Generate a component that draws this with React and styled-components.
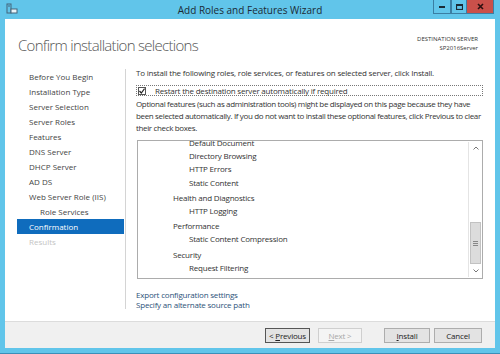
import React from 'react';
import styled, { createGlobalStyle } from 'styled-components';

const Global = createGlobalStyle`
  html, body { margin:0; padding:0; }
  body { width:500px; height:354px; overflow:hidden; font-family:"Open Sans", "Noto Sans", sans-serif; }
`

const Window = styled.div`
  width:500px; height:354px; box-sizing:border-box;
  background:#61c5ea; display:flex; flex-direction:column;
  border-bottom:1px solid #3b8fb8;
`
const TitleBar = styled.div`
  height:19px; position:relative; display:flex; align-items:center; justify-content:center;
  font-size:10px; color:#1b2b36;
`
const AppIcon = styled.svg`
  position:absolute; left:6px; top:3px;
`
const WinButtons = styled.div`
  position:absolute; right:6px; top:0; display:flex; height:14px;
`
const WinBtn = styled.div`
  width:${p => p.w}px; height:14px; box-sizing:border-box;
  background:${p => p.close ? '#c9504a' : '#61c5ea'};
  border:1px solid #3a7ea3; border-top:none;
  border-left:${p => p.close ? 'none' : '1px solid #3a7ea3'};
  display:flex; align-items:center; justify-content:center;
`
const Body = styled.div`
  flex:1; margin:0 5px 5px; background:#fff; display:flex; flex-direction:column;
`
const Header = styled.div`
  height:46px; display:flex; justify-content:space-between; align-items:flex-start;
  padding:0 17px 0 13px;
`
const PageTitle = styled.div`
  font-size:15px; font-weight:300; color:#555; margin-top:16px; letter-spacing:-0.7px;
`
const Dest = styled.div`
  text-align:right; font-size:6px; color:#333; margin-top:16px; line-height:9px;
`
const Main = styled.div`
  flex:1; display:flex; min-height:0;
`
const Nav = styled.div`
  width:121px; flex-shrink:0; box-sizing:border-box; border-right:1px solid #d4d4d4;
  margin:4px 0 12px; display:flex; flex-direction:column;
`
const NavItem = styled.div`
  height:15px; line-height:15px; font-size:8px;
  margin-left:12px; width:107px; box-sizing:border-box;
  padding-left:${p => p.sub ? 23 : 12}px;
  color:${p => p.active ? '#fff' : p.muted ? '#c4c4c4' : '#444'};
  background:${p => p.active ? '#0f6cbd' : 'transparent'};
`
const Content = styled.div`
  flex:1; min-width:0; padding:2px 12px 0 10px; display:flex; flex-direction:column;
  font-size:8px; color:#333; letter-spacing:-0.2px;
`
const Line = styled.div`
  line-height:12px;
`
const CheckRow = styled.div`
  margin-top:6px; height:11px; box-sizing:border-box; border:1px dotted #777;
  display:flex; align-items:center; gap:9px; padding-left:1px;
`
const Box = styled.div`
  width:8px; height:8px; box-sizing:border-box; border:1px solid #555; background:#fff;
  display:flex; align-items:center; justify-content:center;
`
const Para = styled.div`
  margin-top:2px; line-height:12px; letter-spacing:-0.35px; white-space:nowrap;
`
const ListBox = styled.div`
  margin-top:6px; margin-left:1px; height:139px; box-sizing:border-box;
  border:1px solid #acacac; display:flex; overflow:hidden;
`
const ListInner = styled.div`
  flex:1; overflow:hidden; padding-left:35px; color:#333;
`
const Group = styled.div`
  margin-top:${p => p.first ? -5 : 2}px;
`
const Item = styled.div`
  height:13.2px; line-height:13.2px; padding-left:${p => p.sub ? 16 : 0}px;
`
const ScrollBar = styled.div`
  width:13px; border-left:1px solid #e4e4e4; background:#fff;
  display:flex; flex-direction:column; margin:1px 0;
`
const Arrow = styled.div`
  height:12px; display:flex; align-items:center; justify-content:center;
`
const Track = styled.div`
  flex:1; display:flex; flex-direction:column; justify-content:flex-end; padding-bottom:1px;
`
const Thumb = styled.div`
  height:40px; background:#dcdcdc; border:1px solid #c2c2c2; margin:0 1px;
  display:flex; align-items:center; justify-content:center;
`
const Links = styled.div`
  margin-top:11px; display:flex; flex-direction:column;
`
const LinkText = styled.a`
  color:#2c5279; line-height:10px; text-decoration:none; font-size:8px;
`
const Footer = styled.div`
  height:26px; background:#f0f0f0; border-top:1px solid #dcdcdc;
  display:flex; align-items:center; justify-content:flex-end; padding-right:13px;
`
const Btn = styled.button`
  width:${p => p.w}px; height:15px; padding:0; box-sizing:border-box;
  font-family:inherit; font-size:8px; letter-spacing:-0.2px;
  color:${p => p.disabled ? '#a8a8a8' : '#222'};
  background:${p => p.disabled ? '#f4f4f4' : '#e3e3e3'};
  border:1px solid ${p => p.primary ? '#555' : p.disabled ? '#cfcfcf' : '#adadad'};
  margin-left:${p => p.space || 0}px;
`

const navItems = [
  'Before You Begin', 'Installation Type', 'Server Selection', 'Server Roles', 'Features',
  'DNS Server', 'DHCP Server', 'AD DS', 'Web Server Role (IIS)',
];

const groups = [
  { head: null, items: ['Default Document', 'Directory Browsing', 'HTTP Errors', 'Static Content'] },
  { head: 'Health and Diagnostics', items: ['HTTP Logging'] },
  { head: 'Performance', items: ['Static Content Compression'] },
  { head: 'Security', items: ['Request Filtering'] },
];

const App = () => {
  return (
    <Window>
      <Global />
      <TitleBar>
        <AppIcon width="12" height="12" viewBox="0 0 12 12">
          <rect x="1" y="1" width="4" height="9" fill="none" stroke="#44657a" strokeWidth="1" />
          <line x1="2" y1="3" x2="4" y2="3" stroke="#44657a" />
          <rect x="5" y="6" width="6" height="4" fill="#e8f4fa" stroke="#44657a" strokeWidth="1" />
        </AppIcon>
        Add Roles and Features Wizard
        <WinButtons>
          <WinBtn w={18}>
            <svg width="7" height="3"><rect x="0" y="1" width="6" height="2" fill="#1b2b36" /></svg>
          </WinBtn>
          <WinBtn w={16}>
            <svg width="7" height="6"><rect x="0.5" y="0.5" width="6" height="5" fill="none" stroke="#1b2b36" strokeWidth="1.2" /><rect x="0" y="0" width="7" height="2" fill="#1b2b36" /></svg>
          </WinBtn>
          <WinBtn w={27} close>
            <svg width="7" height="7"><path d="M1 1 L6 6 M6 1 L1 6" stroke="#2b1010" strokeWidth="1.6" /></svg>
          </WinBtn>
        </WinButtons>
      </TitleBar>
      <Body>
        <Header>
          <PageTitle>Confirm installation selections</PageTitle>
          <Dest>DESTINATION SERVER<br />SP2016Server</Dest>
        </Header>
        <Main>
          <Nav>
            {navItems.map(n => <NavItem key={n}>{n}</NavItem>)}
            <NavItem sub>Role Services</NavItem>
            <NavItem active>Confirmation</NavItem>
            <NavItem muted>Results</NavItem>
          </Nav>
          <Content>
            <Line>To install the following roles, role services, or features on selected server, click Install.</Line>
            <CheckRow>
              <Box>
                <svg width="6" height="6" viewBox="0 0 6 6"><path d="M0.5 3 L2.3 5 L5.6 0.6" fill="none" stroke="#222" strokeWidth="1.2" /></svg>
              </Box>
              Restart the destination server automatically if required
            </CheckRow>
            <Para>
              Optional features (such as administration tools) might be displayed on this page because they have<br />
              been selected automatically. If you do not want to install these optional features, click Previous to clear<br />
              their check boxes.
            </Para>
            <ListBox>
              <ListInner>
                {groups.map((g, i) => (
                  <Group key={i} first={i === 0}>
                    {g.head && <Item>{g.head}</Item>}
                    {g.items.map(it => <Item sub key={it}>{it}</Item>)}
                  </Group>
                ))}
              </ListInner>
              <ScrollBar>
                <Arrow>
                  <svg width="6" height="4"><path d="M0.5 3.5 L3 1 L5.5 3.5" fill="none" stroke="#777" /></svg>
                </Arrow>
                <Track>
                  <Thumb>
                    <svg width="5" height="5"><path d="M0 0.5 H5 M0 2.5 H5 M0 4.5 H5" stroke="#888" /></svg>
                  </Thumb>
                </Track>
                <Arrow>
                  <svg width="6" height="4"><path d="M0.5 0.5 L3 3 L5.5 0.5" fill="none" stroke="#777" /></svg>
                </Arrow>
              </ScrollBar>
            </ListBox>
            <Links>
              <LinkText>Export configuration settings</LinkText>
              <LinkText>Specify an alternate source path</LinkText>
            </Links>
          </Content>
        </Main>
        <Footer>
          <Btn w={45} primary>&lt; <u>P</u>revious</Btn>
          <Btn w={44} space={8} disabled><u>N</u>ext &gt;</Btn>
          <Btn w={46} space={22}><u>I</u>nstall</Btn>
          <Btn w={48} space={4}>Cancel</Btn>
        </Footer>
      </Body>
    </Window>
  );
};

export default App;
